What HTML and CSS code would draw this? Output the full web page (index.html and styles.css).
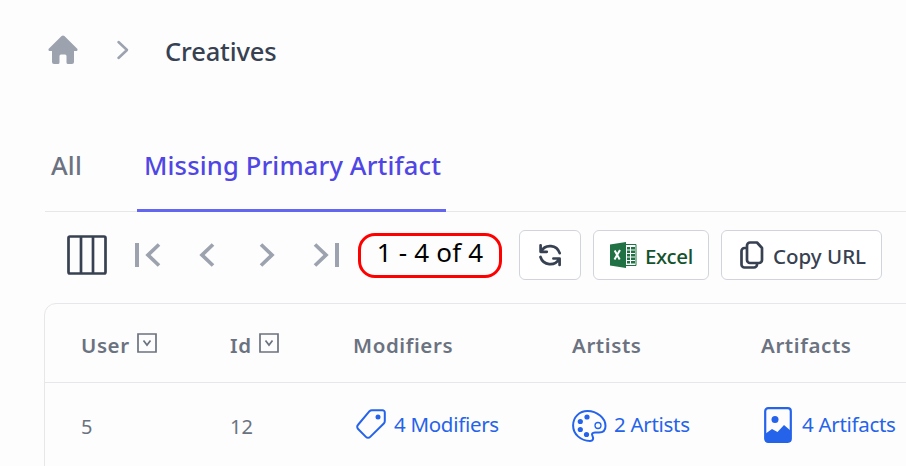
FILE: index.html
```
<!DOCTYPE html>
<html lang="en">
<head>
<meta charset="utf-8">
<title>Creatives</title>
<link rel="stylesheet" href="styles.css">
</head>
<body>
<nav class="breadcrumb">
  <svg class="home" width="30" height="30" viewBox="0 0 30 30"><path d="M13.600 1.100a2 2 0 0 1 2.800 0L29 13.500c1 1.100.600 2.500-1 2.500H26v11a2 2 0 0 1-2 2h-4a1.500 1.500 0 0 1-1.500-1.500V21a1.500 1.500 0 0 0-1.500-1.500h-4a1.500 1.500 0 0 0-1.500 1.500v6.500A1.500 1.500 0 0 1 10 29H6a2 2 0 0 1-2-2V16H2c-1.600 0-2-1.400-1-2.500z"/></svg>
  <svg class="crumb-sep" width="14" height="20" viewBox="0 0 14 20"><path d="M2.500 2l8.500 8-8.500 8"/></svg>
  <span class="crumb">Creatives</span>
</nav>
<div class="tabs">
  <a class="tab tab-all">All</a>
  <a class="tab tab-active"><span>Missing Primary Artifact</span></a>
</div>
<div class="toolbar">
  <svg class="columns" width="40" height="40" viewBox="0 0 40 40"><rect x="1.500" y="1.500" width="37" height="37" rx="1.500"/><path d="M14 2v36M26 2v36"/></svg>
  <svg class="pager first" width="26" height="24" viewBox="0 0 26 24"><path class="bar" d="M2 0v24"/><path d="M24 1.500L13 12l11 10.500"/></svg>
  <svg class="pager prev" width="16" height="24" viewBox="0 0 16 24"><path d="M14 1.500L3 12l11 10.500"/></svg>
  <svg class="pager next" width="16" height="24" viewBox="0 0 16 24"><path d="M2 1.500L13 12 2 22.500"/></svg>
  <svg class="pager last" width="26" height="24" viewBox="0 0 26 24"><path class="bar" d="M24 0v24"/><path d="M2 1.500L13 12 2 22.500"/></svg>
  <div class="range"><span>1 - 4 of 4</span></div>
  <button class="btn refresh"><svg width="24" height="24" viewBox="0 0 24 24"><path d="M2.600 2.300v6.500h6.200M3 8.500A10.200 10.200 0 0 1 21.700 10.200M21.600 22v-6.500h-6.200M21.200 15.800A10.200 10.200 0 0 1 2.500 14"/></svg></button>
  <button class="btn excel"><svg width="27" height="26" viewBox="0 0 27 26"><path fill="#fff" stroke="#207245" d="M14 2.500h12v21H14z"/><path fill="#207245" d="M0 2.500L16 0v26L0 23.500zM17 5h3v2.500h-3zM21 5h4v2.500h-4zM17 8.500h3V11h-3zM21 8.500h4V11h-4zM17 12h3v2.500h-3zM21 12h4v2.500h-4zM17 15.500h3V18h-3zM21 15.500h4V18h-4zM17 19h3v2.500h-3zM21 19h4v2.500h-4z"/><path fill="none" stroke="#fff" stroke-width="2" d="M4.700 8.500l5 9M10 8l-5.500 9.500"/></svg><span>Excel</span></button>
  <button class="btn copy"><svg width="24" height="28" viewBox="0 0 24 28"><path d="M10 1.500h7l5 5.500V19a3 3 0 0 1-3 3h-9a3 3 0 0 1-3-3V4.500a3 3 0 0 1 3-3zM7 7H4.500a3 3 0 0 0-3 3v13.500a3 3 0 0 0 3 3h9.500a3 3 0 0 0 3-3V22"/></svg><span>Copy URL</span></button>
</div>
<div class="table">
  <div class="row head">
    <div class="cell">User<svg class="filter" width="20" height="20" viewBox="0 0 20 20"><path d="M1 1h18v18H1zM6.500 7.500l3.500 4.500 3.500-4.500"/></svg></div>
    <div class="cell">Id<svg class="filter" width="20" height="20" viewBox="0 0 20 20"><path d="M1 1h18v18H1zM6.500 7.500l3.500 4.500 3.500-4.500"/></svg></div>
    <div class="cell">Modifiers</div>
    <div class="cell">Artists</div>
    <div class="cell">Artifacts</div>
  </div>
  <div class="row data">
    <div class="cell num">5</div>
    <div class="cell num">12</div>
    <div class="cell link"><svg class="tag" width="30" height="30" viewBox="0 0 30 30"><path d="M16 1.200h10.500A2.300 2.300 0 0 1 28.800 3.500V12a3.500 3.500 0 0 1-1 2.500L14.200 27.900a3 3 0 0 1-4.300 0L2.100 20a3 3 0 0 1 0-4.300L13.500 2.200A3.500 3.500 0 0 1 16 1.200z"/><circle cx="22" cy="8" r="2.500"/></svg><span>4 Modifiers</span></div>
    <div class="cell link"><svg class="palette" width="35" height="32" viewBox="0 0 35 32"><path d="M1.100 15.500C1.100 7 7.500 1.100 15.500 1.100c9.500 0 18 7 18 14.900 0 4-2.500 6.500-6.500 6.500h-4c-3 0-3.500 1.700-2.500 3.500 1.400 2.800.500 4.900-2.500 4.900C8.500 30.900 1.100 24 1.100 15.500z"/><circle class="thumb" cx="26" cy="15.500" r="3"/><circle class="dot" cx="15" cy="7" r="2.600"/><circle class="dot" cx="8.300" cy="11.500" r="2.600"/><circle class="dot" cx="8.300" cy="19.500" r="2.600"/><circle class="dot" cx="14.500" cy="24.500" r="2.600"/></svg><span>2 Artists</span></div>
    <div class="cell link"><svg class="picture" width="28" height="36" viewBox="0 0 28 36"><rect x="1.200" y="1.200" width="25.600" height="33.600" rx="3"/><circle class="fill" cx="11" cy="12.500" r="3.500"/><path class="fill" d="M1 27l7-5 5.500 3L20 18l7 6v9a2 2 0 0 1-2 2H3a2 2 0 0 1-2-2z"/></svg><span>4 Artifacts</span></div>
  </div>
</div>
</body>
</html>
```
FILE: styles.css
```
* { box-sizing: border-box; }
body {
  margin: 0;
  width: 906px;
  height: 466px;
  overflow: hidden;
  background: #fdfdfd;
  font-family: "Noto Sans", "Open Sans", sans-serif;
  color: #374151;
}
svg { display: block; flex: none; fill: none; }
span { white-space: nowrap; }
.breadcrumb { display: flex; align-items: center; height: 101px; padding-left: 48px; }
.home { margin-top: -1px; fill: #9ca3af; }
.crumb-sep { margin: -1px 0 0 38px; stroke: #9ca3af; stroke-width: 2.500; stroke-linecap: round; stroke-linejoin: round; }
.crumb { margin-left: 35px; padding-top: 1px; font-size: 25.500px; font-weight: 480; letter-spacing: -0.150px; }
.tabs { display: flex; height: 111px; margin-left: 45px; padding-top: 19px; border-bottom: 1px solid #e5e7eb; }
.tab { height: 92px; line-height: 91px; font-size: 25.500px; font-weight: 480; color: #6b7280; letter-spacing: 0.160px; }
.tab-all { width: 92px; padding-left: 6px; }
.tab-active { width: 309px; padding-left: 7px; color: #4f46e5; border-bottom: 3px solid #6366f1; }
.toolbar { display: flex; align-items: center; height: 86px; padding-left: 67px; }
.columns { stroke: #374151; stroke-width: 2.700; }
.pager { stroke: #9ca3af; stroke-width: 3.700; }
.pager .bar { stroke-width: 4; }
.first { margin-left: 28px; }
.prev { margin-left: 38px; }
.next { margin-left: 44px; }
.last { margin-left: 38px; }
.range { display: flex; justify-content: center; width: 144px; height: 45px; margin-left: 19px; border: 3px solid #f00; border-radius: 17px; font-size: 26px; line-height: 33px; color: #000; font-weight: 400; letter-spacing: 0.200px; }
.btn { display: flex; flex: none; align-items: center; height: 50px; padding: 0; background: #fff; border: 1px solid #d1d5db; border-radius: 6px; color: #374151; font-family: inherit; font-size: 20.500px; font-weight: 480; }
.btn span { padding-top: 2px; }
.refresh { width: 62px; margin-left: 17px; justify-content: center; stroke: #374151; stroke-width: 2.700; stroke-linecap: round; stroke-linejoin: round; }
.excel { width: 116px; margin-left: 12px; padding-left: 16px; gap: 8px; color: #14532d; letter-spacing: -0.300px; }
.copy { width: 161px; margin-left: 12px; padding-left: 18px; gap: 9px; }
.copy svg { stroke: #374151; stroke-width: 2.700; stroke-linejoin: round; }
.table { width: 880px; height: 180px; margin: 5px 0 0 44px; border: 1px solid #e5e7eb; border-radius: 12px; }
.row { display: grid; grid-template-columns: 149px 123px 219px 189px 150px; padding-left: 36px; }
.cell { display: flex; align-items: center; }
.head { height: 79px; border-bottom: 1px solid #e5e7eb; padding-top: 3px; color: #6b7280; font-size: 20.500px; font-weight: 570; letter-spacing: 0.600px; }
.filter { margin: -4px 0 0 7px; stroke: #6b7280; stroke-width: 1.700; }
.data { height: 83px; }
.num { padding-top: 4px; font-size: 20px; color: #6b7280; }
.link { color: #2563eb; font-size: 20.500px; letter-spacing: -0.300px; }
.link span { margin-top: -2px; }
.tag { margin: -1px 8px 0 3px; stroke: #2563eb; stroke-width: 2; }
.tag circle, .dot, .fill { fill: #2563eb; stroke: none; }
.palette { margin: 3px 7px 0 0; stroke: #2563eb; stroke-width: 2; }
.thumb { stroke-width: 1.300; }
.picture { margin: 0 10px 0 3px; stroke: #2563eb; stroke-width: 2.200; }
```
